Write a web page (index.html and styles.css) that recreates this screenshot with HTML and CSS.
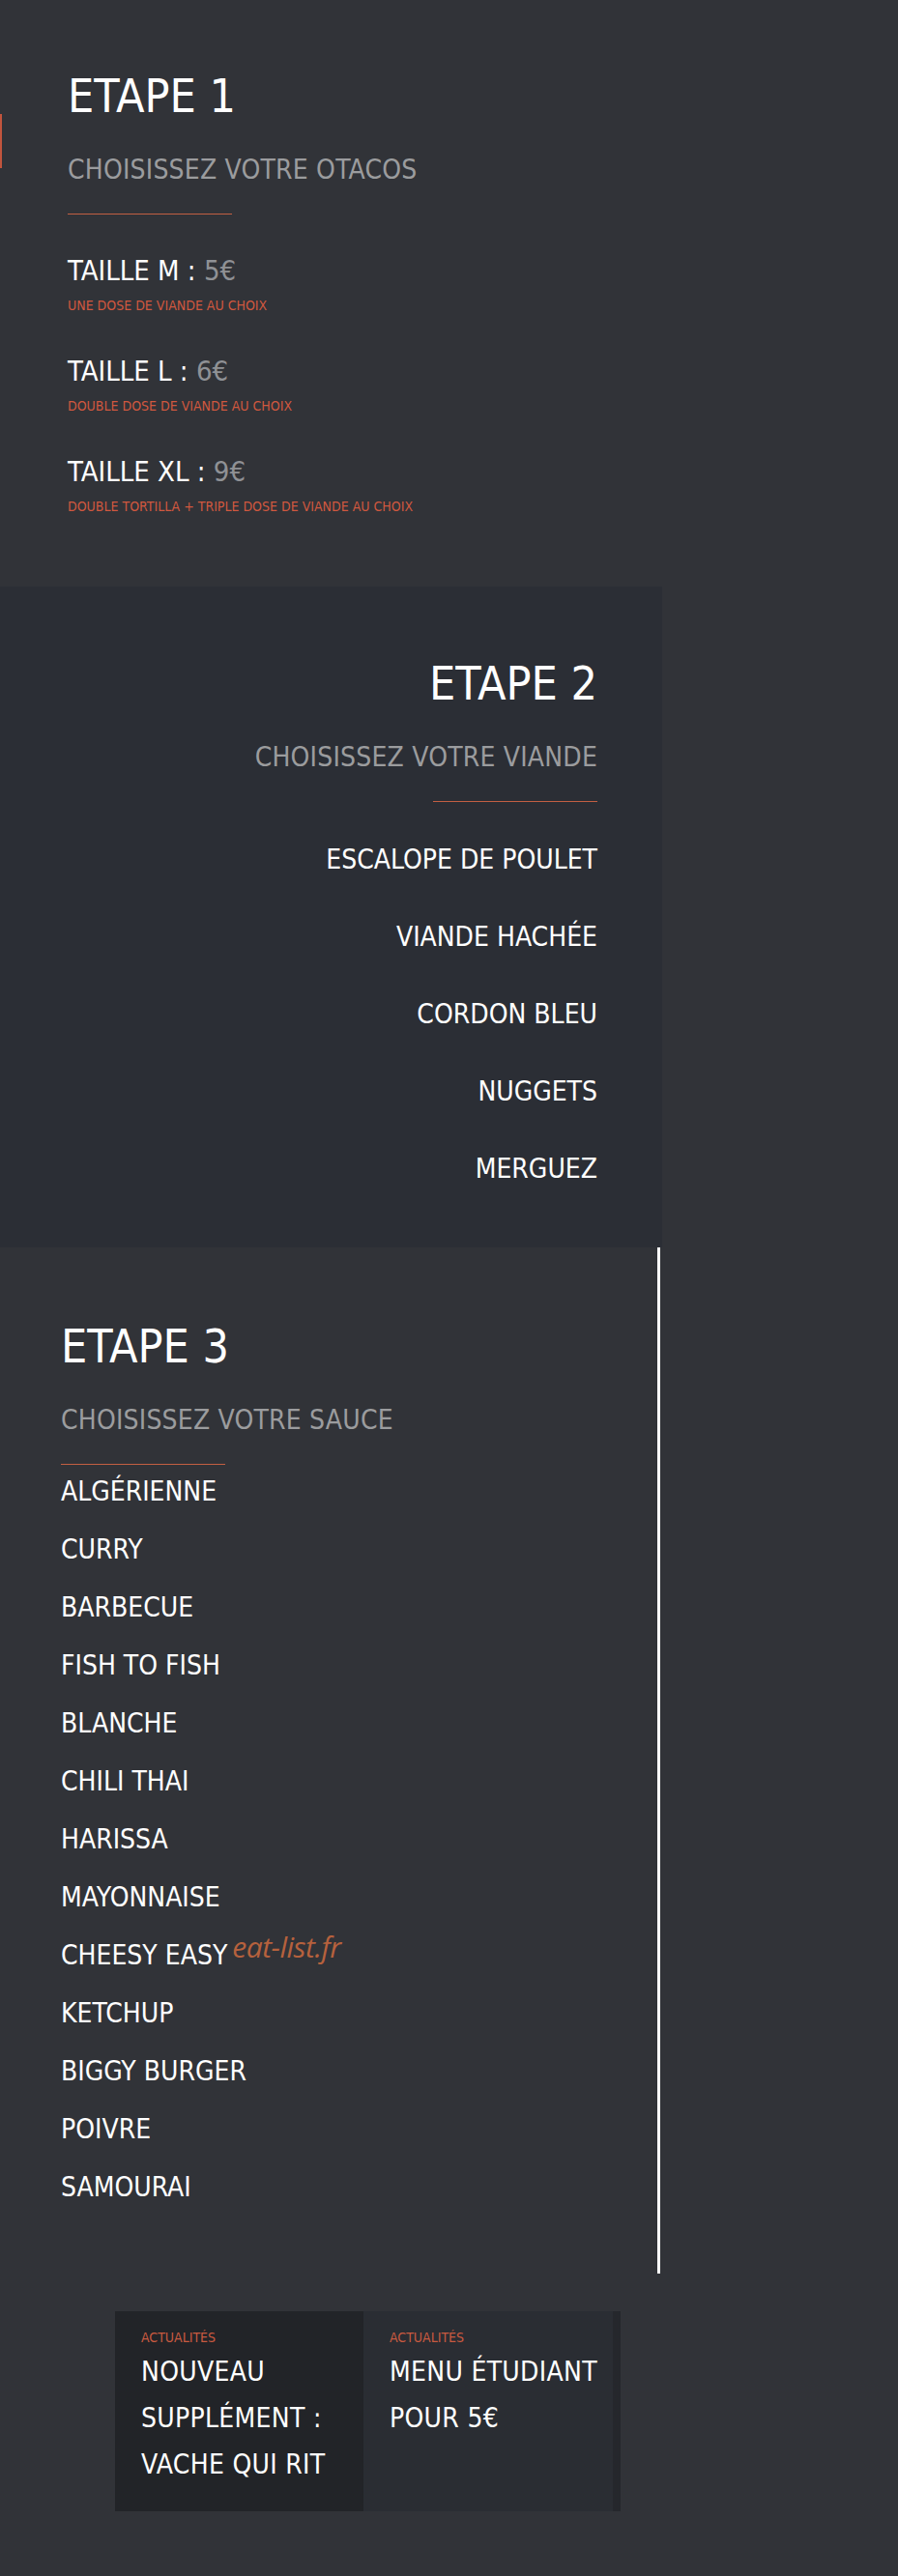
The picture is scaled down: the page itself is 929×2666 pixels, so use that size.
FILE: index.html
```html
<!DOCTYPE html>
<html lang="fr">
<head>
    <meta charset="UTF-8">
    <meta name="viewport" content="width=device-width, initial-scale=1.0">
    <title>O'Tacos - Menu</title>
    <link rel="stylesheet" href="styles.css">
</head>
<body>

    <!-- Etape 1 : la taille -->
    <section class="step step-one">
        <h1 class="step-title">ETAPE 1</h1>
        <h2 class="step-sub">CHOISISSEZ VOTRE OTACOS</h2>
        <hr class="step-rule">
        <ul class="sizes">
            <li>
                <p class="size-name">TAILLE M : <span class="price">5€</span></p>
                <p class="size-desc">UNE DOSE DE VIANDE AU CHOIX</p>
            </li>
            <li>
                <p class="size-name">TAILLE L : <span class="price">6€</span></p>
                <p class="size-desc">DOUBLE DOSE DE VIANDE AU CHOIX</p>
            </li>
            <li>
                <p class="size-name">TAILLE XL : <span class="price">9€</span></p>
                <p class="size-desc">DOUBLE TORTILLA + TRIPLE DOSE DE VIANDE AU CHOIX</p>
            </li>
        </ul>
    </section>

    <!-- Etape 2 : la viande -->
    <section class="step step-two">
        <h1 class="step-title">ETAPE 2</h1>
        <h2 class="step-sub">CHOISISSEZ VOTRE VIANDE</h2>
        <hr class="step-rule">
        <ul class="choices meats">
            <li>ESCALOPE DE POULET</li>
            <li>VIANDE HACHÉE</li>
            <li>CORDON BLEU</li>
            <li>NUGGETS</li>
            <li>MERGUEZ</li>
        </ul>
    </section>

    <!-- Etape 3 : la sauce -->
    <section class="step step-three">
        <h1 class="step-title">ETAPE 3</h1>
        <h2 class="step-sub">CHOISISSEZ VOTRE SAUCE</h2>
        <hr class="step-rule">
        <ul class="choices sauces">
            <li>ALGÉRIENNE</li>
            <li>CURRY</li>
            <li>BARBECUE</li>
            <li>FISH TO FISH</li>
            <li>BLANCHE</li>
            <li>CHILI THAI</li>
            <li>HARISSA</li>
            <li>MAYONNAISE</li>
            <li>CHEESY EASY<span class="watermark">eat-list.fr</span></li>
            <li>KETCHUP</li>
            <li>BIGGY BURGER</li>
            <li>POIVRE</li>
            <li>SAMOURAI</li>
        </ul>
    </section>

    <!-- Actualités -->
    <div class="news">
        <article class="news-card">
            <p class="news-tag">ACTUALITÉS</p>
            <p class="news-title">NOUVEAU SUPPLÉMENT&nbsp;: VACHE QUI RIT</p>
        </article>
        <article class="news-card news-card-alt">
            <p class="news-tag">ACTUALITÉS</p>
            <p class="news-title">MENU ÉTUDIANT POUR 5€</p>
        </article>
        <div class="news-edge"></div>
    </div>

</body>
</html>
```

FILE: styles.css
```css
body {
    margin: 0;
    background-color: #313338;
    color: #ffffff;
    font-family: "Liberation Sans Narrow", "DejaVu Sans Condensed", "Liberation Sans", sans-serif;
}

p, ul, h1, h2 {
    margin: 0;
    padding: 0;
}

ul {
    list-style: none;
}

/* blocs d'etapes */
.step {
    box-sizing: border-box;
}

.step-title {
    font-size: 48px;
    line-height: 52px;
    font-weight: normal;
    margin-bottom: 31px;
}

.step-sub {
    font-size: 28px;
    line-height: 40px;
    font-weight: normal;
    color: #9b9c9e;
    letter-spacing: 0.2px;
    margin-bottom: 25px;
}

.step-rule {
    width: 170px;
    height: 1px;
    border: none;
    background-color: #c25f42;
    margin: 0;
}

.step-one {
    position: relative;
    padding: 73px 0 73px 70px;
}

/* petit repere rouge sur le bord gauche */
.step-one::before {
    content: "";
    position: absolute;
    left: 0;
    top: 118px;
    width: 2px;
    height: 56px;
    background-color: #c2553d;
}

.step-two {
    width: 685px;
    background-color: #2b2e35;
    text-align: right;
    padding: 74px 67px 61px 0;
}

.step-two .step-rule {
    margin-left: auto;
}

.step-three {
    width: 683px;
    border-right: 3px solid #ffffff;
    padding: 76px 0 69px 63px;
}

/* tailles */
.sizes {
    margin-top: 38px;
    display: flex;
    flex-direction: column;
    gap: 38px;
}

.size-name {
    font-size: 29px;
    line-height: 40px;
    margin-bottom: 6px;
}

.price {
    color: #8f9195;
}

.size-desc {
    font-size: 14px;
    line-height: 20px;
    color: #d0583f;
}

/* listes viandes / sauces */
.choices {
    display: flex;
    flex-direction: column;
}

.choices li {
    font-size: 28px;
    line-height: 40px;
}

.meats {
    margin-top: 40px;
    gap: 40px;
}

.sauces {
    margin-top: 8px;
    gap: 20px;
}

/* le filigrane ne doit pas agrandir la ligne */
.watermark {
    font-family: "Open Sans", sans-serif;
    font-style: italic;
    font-size: 30px;
    line-height: 0;
    color: #b6613d;
    margin-left: 5px;
    letter-spacing: -0.5px;
    vertical-align: 7px;
}

/* actualites */
.news {
    display: flex;
    margin: 39px 0 0 119px;
    padding-bottom: 67px;
}

.news-card {
    width: 257px;
    box-sizing: border-box;
    padding: 18px 8px 24px 27px;
    background-color: #222428;
}

.news-card-alt {
    width: 258px;
    background-color: #2a2d33;
}

.news-edge {
    width: 8px;
    background-color: #25272c;
}

.news-tag {
    font-size: 14px;
    line-height: 18px;
    color: #c85a40;
    margin-bottom: 3px;
}

.news-title {
    font-size: 28px;
    line-height: 48px;
    letter-spacing: 0.3px;
}
```
